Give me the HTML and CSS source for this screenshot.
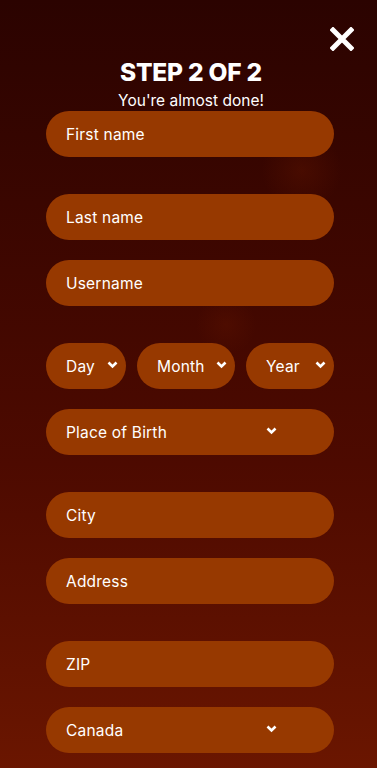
FILE: index.html
```html
<!DOCTYPE html>
<html lang="en">
<head>
  <meta charset="UTF-8">
  <meta name="viewport" content="width=device-width, initial-scale=1.0">
  <title>Sign up</title>
  <link rel="stylesheet" href="styles.css">
</head>
<body>
  <div class="signup">
    <div class="signup-top">
      <button class="close-btn" aria-label="Close">
        <svg width="24" height="24" viewBox="0 0 24 24">
          <path d="M3 3L21 21M21 3L3 21" stroke="#fff" stroke-width="5" stroke-linecap="square"/>
        </svg>
      </button>
    </div>
    <h1 class="signup-title">STEP 2 OF 2</h1>
    <p class="signup-sub">You're almost done!</p>
    <form class="signup-form">
      <div class="field gap-lg">First name</div>
      <div class="field">Last name</div>
      <div class="field gap-lg">Username</div>
      <div class="date-row">
        <div class="field select small">Day
          <svg class="chev" width="11" height="8" viewBox="0 0 11 8"><path d="M1.5 1.5L5.5 5.5L9.5 1.5" fill="none" stroke="#fff" stroke-width="2.6"/></svg>
        </div>
        <div class="field select small">Month
          <svg class="chev" width="11" height="8" viewBox="0 0 11 8"><path d="M1.5 1.5L5.5 5.5L9.5 1.5" fill="none" stroke="#fff" stroke-width="2.6"/></svg>
        </div>
        <div class="field select small">Year
          <svg class="chev" width="11" height="8" viewBox="0 0 11 8"><path d="M1.5 1.5L5.5 5.5L9.5 1.5" fill="none" stroke="#fff" stroke-width="2.6"/></svg>
        </div>
      </div>
      <div class="field select wide gap-lg">Place of Birth
        <svg class="chev" width="11" height="8" viewBox="0 0 11 8"><path d="M1.5 1.5L5.5 5.5L9.5 1.5" fill="none" stroke="#fff" stroke-width="2.6"/></svg>
      </div>
      <div class="field">City</div>
      <div class="field gap-lg">Address</div>
      <div class="field">ZIP</div>
      <div class="field select wide">Canada
        <svg class="chev" width="11" height="8" viewBox="0 0 11 8"><path d="M1.5 1.5L5.5 5.5L9.5 1.5" fill="none" stroke="#fff" stroke-width="2.6"/></svg>
      </div>
    </form>
  </div>
</body>
</html>
```

FILE: styles.css
```css
html, body {
  margin: 0;
  padding: 0;
}
body {
  min-height: 768px;
  font-family: "Inter", "Noto Sans", sans-serif;
  color: #fff;
  background:
    radial-gradient(circle at 80% 22%, rgba(120, 30, 0, 0.25), transparent 40px),
    radial-gradient(circle at 60% 42%, rgba(120, 30, 0, 0.2), transparent 30px),
    linear-gradient(180deg, #2b0300 0%, #3f0700 35%, #4d0a00 60%, #6b1600 100%);
}
.signup {
  width: 288px;
  margin-left: 46px;
  padding-top: 27px;
}
.signup-top {
  display: flex;
  justify-content: flex-end;
  margin-right: -20px;
  height: 26px;
}
.close-btn {
  background: none;
  border: none;
  padding: 0;
  width: 24px;
  height: 24px;
  cursor: pointer;
}
.signup-title {
  margin: 4px 0 0;
  text-align: center;
  font-size: 24.5px;
  font-weight: 800;
  line-height: 30px;
  letter-spacing: -0.2px;
  padding-left: 2px;
}
.signup-sub {
  margin: 5px 0 0;
  text-align: center;
  font-size: 15.5px;
  line-height: 18px;
  padding-left: 2px;
}
.signup-form {
  margin-top: 1px;
}
.field {
  height: 46px;
  border-radius: 23px;
  background: #973900;
  padding: 0 20px;
  display: flex;
  align-items: center;
  font-size: 15.5px;
  letter-spacing: 0.2px;
  margin-bottom: 20px;
  box-sizing: border-box;
}
.field.gap-lg {
  margin-bottom: 37px;
}
.select {
  justify-content: space-between;
}
.select.wide {
  padding-right: 57px;
}
.chev {
  display: block;
  margin-top: -3px;
}
.date-row {
  display: flex;
  gap: 11px;
  margin-bottom: 20px;
}
.date-row .field {
  margin-bottom: 0;
  padding-right: 8px;
}
.date-row .field:nth-child(1) {
  width: 80px;
}
.date-row .field:nth-child(2) {
  width: 98px;
}
.date-row .field:nth-child(3) {
  width: 88px;
}
```
